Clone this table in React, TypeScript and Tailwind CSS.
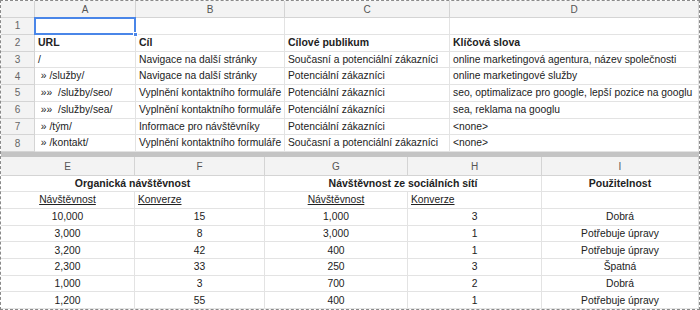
import React from "react";

const font = { fontFamily: '"Liberation Sans", Arial, sans-serif' };

const topRows: string[][] = [
  ["", "", "", ""],
  ["URL", "Cíl", "Cílové publikum", "Klíčová slova"],
  ["/", "Navigace na další stránky", "Současní a potenciální zákazníci", "online marketingová agentura, název společnosti"],
  ["\u00a0» /služby/", "Navigace na další stránky", "Potenciální zákazníci", "online marketingové služby"],
  ["\u00a0»»\u00a0 /služby/seo/", "Vyplnění kontaktního formuláře", "Potenciální zákazníci", "seo, optimalizace pro google, lepší pozice na googlu"],
  ["\u00a0»»\u00a0 /služby/sea/", "Vyplnění kontaktního formuláře", "Potenciální zákazníci", "sea, reklama na googlu"],
  ["\u00a0» /tým/", "Informace pro návštěvníky", "Potenciální zákazníci", "<none>"],
  ["\u00a0» /kontakt/", "Vyplnění kontaktního formuláře", "Současní a potenciální zákazníci", "<none>"],
];

const bottomRows: string[][] = [
  ["10,000", "15", "1,000", "3", "Dobrá"],
  ["3,000", "8", "3,000", "1", "Potřebuje úpravy"],
  ["3,200", "42", "400", "1", "Potřebuje úpravy"],
  ["2,300", "33", "250", "3", "Špatná"],
  ["1,000", "3", "700", "2", "Dobrá"],
  ["1,200", "55", "400", "1", "Potřebuje úpravy"],
];

const topCols = "grid-cols-[34px_101px_149px_165px_249px]";
const botCols = "grid-cols-[134px_130px_143px_134px_157px]";

const hdr =
  "bg-[#f3f3f3] border-r border-b border-[#d4d4d4] flex items-center justify-center text-[10px] text-[#555]";
const cell =
  "border-r border-b border-[#e3e3e3] flex items-center px-[3px] whitespace-nowrap overflow-hidden text-[10.3px] text-[#222]";

export default function App() {
  return (
    <div
      className="w-[700px] h-[310px] border border-dashed border-[#8a8a8a] bg-white overflow-hidden"
      style={font}
    >
      {/* Top section */}
      <div className={`grid ${topCols} grid-rows-[17px_repeat(8,16.75px)]`}>
        <div className={hdr}></div>
        {["A", "B", "C", "D"].map((l) => (
          <div key={l} className={hdr}>
            {l}
          </div>
        ))}
        {topRows.map((r, i) => (
          <React.Fragment key={i}>
            <div className={`${hdr} text-[#666]`}>{i + 1}</div>
            {r.map((c, j) => (
              <div
                key={j}
                className={`${cell} ${i === 1 ? "font-bold text-[10.5px]" : ""} ${
                  i === 0 && j === 0 ? "relative overflow-visible" : ""
                }`}
              >
                {c}
                {i === 0 && j === 0 && (
                  <>
                    <div className="absolute left-[-1px] top-[-1px] right-[-1px] bottom-[-1px] border-2 border-[#4a86e8]" />
                    <div className="absolute right-[-3px] bottom-[-3px] w-[5px] h-[5px] bg-[#4a86e8] border border-white z-10" />
                  </>
                )}
              </div>
            ))}
          </React.Fragment>
        ))}
      </div>

      {/* Separator */}
      <div className="h-[5px] bg-[#c4c4c4]" />

      {/* Bottom section */}
      <div className={`grid ${botCols} grid-rows-[19px_16px_17px_repeat(6,16.7px)]`}>
        {["E", "F", "G", "H", "I"].map((l) => (
          <div key={l} className={hdr}>
            {l}
          </div>
        ))}
        <div className={`${cell} col-span-2 justify-center font-bold text-[10.5px]`}>
          Organická návštěvnost
        </div>
        <div className={`${cell} col-span-2 justify-center font-bold text-[10.5px]`}>
          Návštěvnost ze sociálních sítí
        </div>
        <div className={`${cell} justify-center font-bold text-[10.5px]`}>Použitelnost</div>

        <div className={`${cell} justify-center`}>
          <span className="underline">Návštěvnost</span>
        </div>
        <div className={cell}>
          <span className="underline">Konverze</span>
        </div>
        <div className={`${cell} justify-center`}>
          <span className="underline">Návštěvnost</span>
        </div>
        <div className={cell}>
          <span className="underline">Konverze</span>
        </div>
        <div className={cell}></div>

        {bottomRows.map((r, i) => (
          <React.Fragment key={i}>
            {r.map((c, j) => (
              <div key={j} className={`${cell} justify-center`}>
                {c}
              </div>
            ))}
          </React.Fragment>
        ))}
      </div>
    </div>
  );
}
